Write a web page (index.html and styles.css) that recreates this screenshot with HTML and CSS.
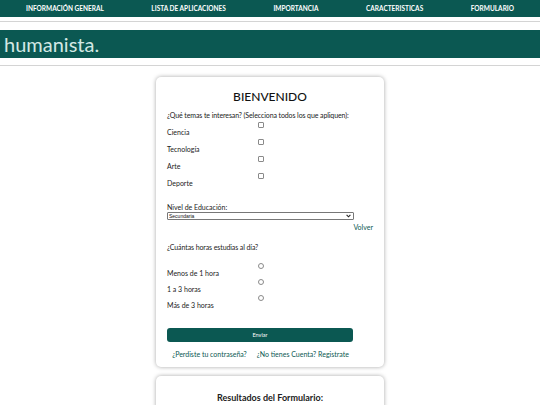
FILE: index.html
```html
<!DOCTYPE html>
<html lang="es">
<head>
    <meta charset="UTF-8">
    <meta name="viewport" content="width=device-width, initial-scale=1.0">
    <title>Humanista - Formulario</title>
    <link rel="stylesheet" href="styles.css">
</head>
<body>
    <nav class="menu">
        <a href="#">Información General</a>
        <a href="#">Lista de Aplicaciones</a>
        <a href="#">Importancia</a>
        <a href="#">Caracteristicas</a>
        <a href="#">Formulario</a>
    </nav>
    <hr class="line">
    <header class="banner">
        <span class="logo">humanista.</span>
    </header>
    <hr class="line">

    <div class="card">
        <h2>BIENVENIDO</h2>
        <form class="form">
            <p class="question">¿Qué temas te interesan? (Selecciona todos los que apliquen):</p>
            <input type="checkbox" id="ciencia"><label for="ciencia">Ciencia</label>
            <input type="checkbox" id="tecnologia"><label for="tecnologia">Tecnología</label>
            <input type="checkbox" id="arte"><label for="arte">Arte</label>
            <input type="checkbox" id="deporte"><label for="deporte">Deporte</label>

            <p class="field-label">Nivel de Educación:</p>
            <div class="select-wrap">
                <select class="select">
                    <option>Secundaria</option>
                    <option>Preparatoria</option>
                    <option>Universidad</option>
                </select>
                <svg class="arrow" width="5" height="4" viewBox="0 0 5 4">
                    <path d="M0.6 0.8 L2.5 2.8 L4.4 0.8" fill="none" stroke="#222" stroke-width="1.1"/>
                </svg>
            </div>
        </form>
        <div class="back"><a href="#">Volver</a></div>

        <form class="form">
            <p class="question hours">¿Cuántas horas estudias al día?</p>
            <input type="radio" name="horas" id="h1"><label for="h1">Menos de 1 hora</label>
            <input type="radio" name="horas" id="h2"><label for="h2">1 a 3 horas</label>
            <input type="radio" name="horas" id="h3"><label for="h3">Más de 3 horas</label>

            <button type="button" class="btn">Enviar</button>
            <div class="links">
                <a href="#">¿Perdiste tu contraseña?</a>
                <a href="#">¿No tienes Cuenta? Registrate</a>
            </div>
        </form>
    </div>

    <div class="card results">
        <h3>Resultados del Formulario:</h3>
    </div>
</body>
</html>
```

FILE: styles.css
```css
body {
    font-family: Lato, "Open Sans", sans-serif;
    margin: 0;
    background-color: white;
    color: #222;
}

.menu {
    background-color: #0b5852;
    height: 17px;
    display: flex;
    justify-content: space-between;
    align-items: center;
    padding: 0 26px;
}
.menu a {
    color: white;
    text-decoration: none;
    text-transform: uppercase;
    font-size: 6.5px;
    font-weight: bold;
}

.line {
    border: none;
    border-top: 1px solid #d4d4d4;
    margin: 4px 0 0 0;
}

.banner {
    background-color: #0b5852;
    height: 28px;
    margin-top: 8px;
    display: flex;
    align-items: center;
    padding-left: 4px;
}
.logo {
    color: #d3e8e4;
    font-size: 20px;
    line-height: 1;
}
.banner + .line {
    margin-top: 7px;
}

.card {
    width: 206px;
    margin: 11px auto 0;
    padding: 10px 11px 8px;
    background-color: white;
    border-radius: 5px;
    box-shadow: 0 0 4px rgba(0, 0, 0, 0.35);
    font-size: 7px;
}
.card h2 {
    text-align: center;
    font-size: 12px;
    line-height: 14px;
    font-weight: 500;
    margin: 3px 0 7px;
    color: #111;
}

.form {
    width: 187px;
}
.form p {
    margin: 0;
}
.question {
    line-height: 9px;
    white-space: nowrap;
    letter-spacing: -0.1px;
}
.form input[type="checkbox"],
.form input[type="radio"] {
    appearance: none;
    display: block;
    width: 6px;
    height: 6px;
    margin: 2px auto 0;
    border: 1px solid #8a8a8a;
    background-color: white;
}
.form input[type="checkbox"] {
    border-radius: 1px;
}
.form input[type="radio"] {
    border-radius: 50%;
    margin-top: 1px;
}
.form label {
    display: block;
    line-height: 9px;
}
.field-label {
    margin-top: 15px !important;
    line-height: 9px;
}
.select-wrap {
    position: relative;
    width: 187px;
}
.select {
    appearance: none;
    display: block;
    width: 187px;
    height: 8px;
    font-size: 5px;
    line-height: 6px;
    padding: 0 1px;
    border: 1px solid #777;
    border-radius: 1px;
    background-color: white;
    color: #111;
    font-family: Arial, sans-serif;
}
.arrow {
    position: absolute;
    right: 3px;
    top: 2px;
    pointer-events: none;
}

.back {
    text-align: right;
    line-height: 9px;
    margin-top: 3px;
}
.back a,
.links a {
    color: #0b5852;
    text-decoration: none;
}

.hours {
    margin-top: 11px !important;
    margin-bottom: 11px !important;
}

.btn {
    display: block;
    width: 186px;
    height: 14px;
    margin-top: 18px;
    background-color: #0b5852;
    color: white;
    border: none;
    border-radius: 3px;
    font-family: inherit;
    font-size: 5.5px;
}
.links {
    display: flex;
    justify-content: center;
    gap: 10px;
    margin-top: 8px;
    line-height: 9px;
}

.results {
    margin-top: 9px;
    padding-top: 16px;
}
.results h3 {
    text-align: center;
    font-size: 9px;
    line-height: 11px;
    margin: 0;
}
```
